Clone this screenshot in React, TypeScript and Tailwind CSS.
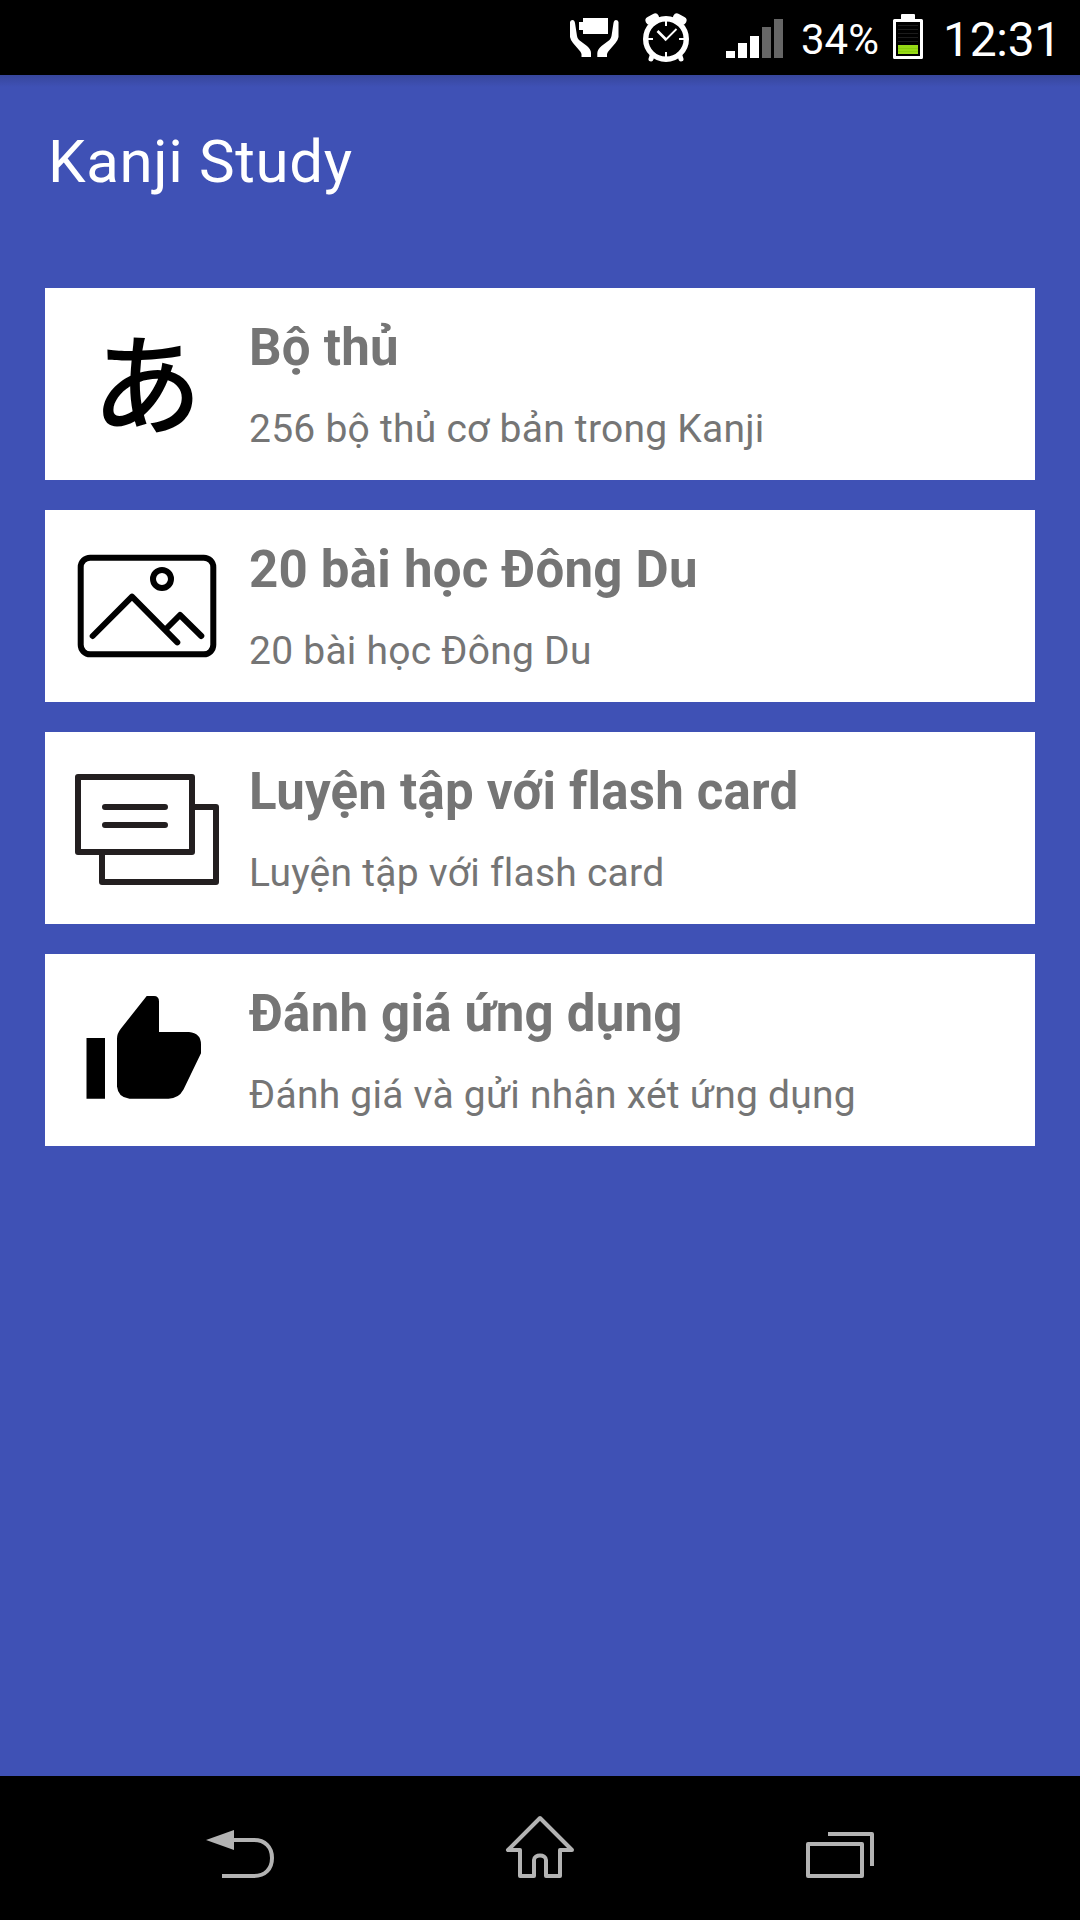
import type { ReactNode } from "react";

type MenuItem = {
  id: string;
  title: string;
  description: string;
  icon: ReactNode;
};

function BatteryCareIcon() {
  return (
    <svg className="w-[49px] h-[75px]" viewBox="0 0 49 75" fill="#fff">
      <path d="M13 18H38V34H13V30H9V22H13Z" />
      <path d="M0 22Q0.5 20 2.5 20Q4.5 20 5 23L7 36Q7.3 38.5 9 40L17 46Q21 49.5 21 53V57H11.5V54Q11 52 9 50L3 43Q0.5 40 0 37Z" />
      <path d="M48.5 22Q48 20 46 20Q44 20 43.5 23L41.5 36Q41 38.5 39.5 40L31.5 46Q27.5 49.5 27.3 53V57H37V54Q37.5 52 39.5 50L45.5 43Q48 40 48.5 37Z" />
    </svg>
  );
}

function AlarmIcon() {
  return (
    <svg className="w-[46px] h-[75px]" viewBox="0 0 46 75" fill="none" stroke="#fff">
      <path d="M6.5 20.5L12 17.5M39.5 20.5L34 17.5" strokeWidth="8" strokeLinecap="round" />
      <path d="M9 56L8 59M37 56L38 59" strokeWidth="5" strokeLinecap="round" />
      <circle cx="23" cy="39" r="20.3" strokeWidth="5.4" fill="#000" />
      <path d="M23 21V26M23 52V57M5 39H10M36 39H41" strokeWidth="2" />
      <path d="M14.500 31L23 39.500" strokeWidth="2.6" />
      <path d="M22 40.500L33.500 29" strokeWidth="1.800" />
    </svg>
  );
}

function SignalIcon() {
  return (
    <svg className="w-[57px] h-[75px]" viewBox="0 0 57 75">
      <path d="M0 51h9v7H0ZM12 43h9v15h-9ZM24 36h9v22h-9Z" fill="#fff" />
      <path d="M36 27h9v31h-9ZM48 19h9v39h-9Z" fill="#666" />
    </svg>
  );
}

function BatteryIcon() {
  return (
    <svg className="w-[30px] h-[75px]" viewBox="0 0 30 75">
      <rect x="8" y="14" width="14" height="7" rx="1" fill="#fff" />
      <rect x="1.5" y="20.5" width="27" height="37" fill="#000" stroke="#fff" strokeWidth="3" strokeLinejoin="round" />
      <path d="M5 25.5h20M5 29.5h20M5 33.5h20M5 37.5h20M5 41.5h20" stroke="#1c1c1c" />
      <rect x="5" y="45" width="20" height="9" fill="#96d916" />
      <path d="M5 48.5h20M5 51.5h20" stroke="#88cc0e" />
    </svg>
  );
}

function HiraganaIcon() {
  return (
    <div className="w-[204px] h-[192px] shrink-0 pb-[13px] flex items-center justify-center text-black text-[110px] leading-none font-medium font-['Noto_Sans_CJK_JP',sans-serif]">
      あ
    </div>
  );
}

function PictureIcon() {
  return (
    <svg
      className="w-[204px] h-[192px] shrink-0"
      viewBox="0 0 204 192"
      fill="none"
      stroke="#000"
      strokeWidth="6"
      strokeLinecap="round"
      strokeLinejoin="round"
    >
      <rect x="35.7" y="47.7" width="132.6" height="96.6" rx="9.5" />
      <circle cx="117" cy="69" r="9" />
      <path d="M47.7 126L87 86.7L132.3 132.3" />
      <path d="M121 119L135 105L156.3 126" />
    </svg>
  );
}

function FlashCardIcon() {
  return (
    <svg
      className="w-[204px] h-[192px] shrink-0"
      viewBox="0 0 204 192"
      fill="none"
      stroke="#231f20"
      strokeWidth="6"
      strokeLinecap="round"
      strokeLinejoin="round"
    >
      <rect x="33" y="45" width="114" height="75" />
      <path d="M60 75H120M60 93H120" />
      <path d="M147 75H171V150H57V120" />
    </svg>
  );
}

function ThumbUpIcon() {
  return (
    <svg className="w-[204px] h-[192px] shrink-0" viewBox="0 0 204 192" fill="#000">
      <path d="M41.5 84H60V144.7H41.5Z" />
      <path d="M72 84.5Q72 79.5 76 74.5L101.7 42H109Q114 42 114 47.5V78H144Q156 79 156 90.5V99.3L138.5 135.5Q133.5 144.7 123.5 144.7H84.5Q73 143.5 72 132.5Z" />
    </svg>
  );
}

const menuItems: MenuItem[] = [
  {
    id: "radicals",
    title: "Bộ thủ",
    description: "256 bộ thủ cơ bản trong Kanji",
    icon: <HiraganaIcon />,
  },
  {
    id: "lessons",
    title: "20 bài học Đông Du",
    description: "20 bài học Đông Du",
    icon: <PictureIcon />,
  },
  {
    id: "flashcards",
    title: "Luyện tập với flash card",
    description: "Luyện tập với flash card",
    icon: <FlashCardIcon />,
  },
  {
    id: "rating",
    title: "Đánh giá ứng dụng",
    description: "Đánh giá và gửi nhận xét ứng dụng",
    icon: <ThumbUpIcon />,
  },
];

function StatusBar() {
  return (
    <header className="h-[75px] shrink-0 bg-black text-white flex items-center justify-end pr-[21px]">
      <BatteryCareIcon />
      <div className="ml-[24px]">
        <AlarmIcon />
      </div>
      <div className="ml-[37px]">
        <SignalIcon />
      </div>
      <span className="w-[80px] ml-[18px] mt-[3px] text-[42px] leading-[75px] whitespace-nowrap">34%</span>
      <div className="ml-[12px]">
        <BatteryIcon />
      </div>
      <span className="w-[116px] ml-[20px] mt-[3px] text-[48px] leading-[75px] tracking-[-0.3px] whitespace-nowrap">
        12:31
      </span>
    </header>
  );
}

function MenuCard({ item }: { item: MenuItem }) {
  return (
    <button className="h-[192px] bg-white flex text-left text-[#757575] cursor-pointer">
      {item.icon}
      <div className="flex flex-col whitespace-nowrap">
        <h2 className="mt-[30px] text-[51px] leading-[60px] tracking-[0.22px] font-bold">{item.title}</h2>
        <p className="mt-[28px] text-[39px] leading-[46px] tracking-[0.25px]">{item.description}</p>
      </div>
    </button>
  );
}

function NavigationBar() {
  return (
    <nav className="h-[144px] shrink-0 bg-black px-[90px] grid grid-cols-3 justify-items-center">
      <svg className="w-[72px] h-[144px]" viewBox="0 0 72 144" fill="none" stroke="#b3b3b3" strokeWidth="4">
        <path d="M2 64L30 54V74Z" fill="#b3b3b3" stroke="none" />
        <path d="M28 64H50C61 64 68 71 68 82S61 100 50 100H18" />
      </svg>
      <svg className="w-[72px] h-[144px]" viewBox="0 0 72 144" fill="none" stroke="#b3b3b3" strokeWidth="4">
        <path d="M36 42L4 74H16V100H30V84C30 78 42 78 42 84V100H56V74H68Z" strokeLinejoin="round" />
      </svg>
      <svg className="w-[72px] h-[144px]" viewBox="0 0 72 144" fill="none" stroke="#b3b3b3" strokeWidth="4">
        <rect x="4" y="68" width="54" height="32" strokeLinejoin="round" />
        <path d="M24 58H68V90" strokeLinejoin="round" />
      </svg>
    </nav>
  );
}

function App() {
  return (
    <div className="w-[1080px] h-[1920px] flex flex-col overflow-hidden bg-[#3f51b5] font-[Roboto,sans-serif]">
      <StatusBar />
      <div className="h-[12px] shrink-0 bg-linear-to-b from-[#37469c] to-[#3f51b5]" />
      <h1 className="h-[201px] shrink-0 pl-[48px] pt-[39px] text-[60px] leading-[72px] tracking-[0.64px] text-white">
        Kanji Study
      </h1>
      <main className="flex-1 px-[45px] flex flex-col gap-[30px]">
        {menuItems.map((item) => (
          <MenuCard key={item.id} item={item} />
        ))}
      </main>
      <NavigationBar />
    </div>
  );
}

export default App;
